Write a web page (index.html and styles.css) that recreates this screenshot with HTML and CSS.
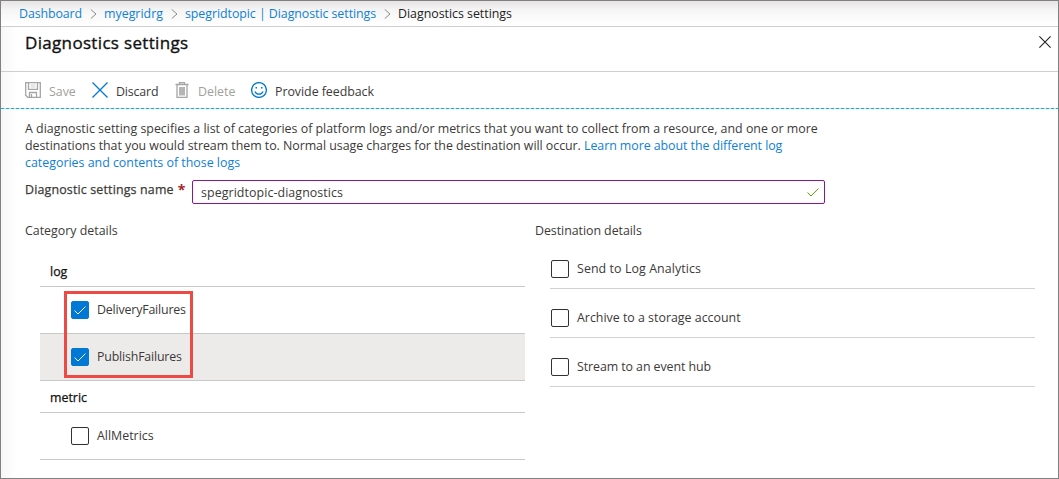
FILE: index.html
```html
<!DOCTYPE html>
<html lang="en">
<head>
<meta charset="utf-8">
<title>Diagnostics settings</title>
<link rel="stylesheet" href="styles.css">
</head>
<body>
<div class="page">
  <nav class="crumbs">
    <a class="c1">Dashboard</a><svg class="chev" viewBox="0 0 7 12"><path d="M.8 1.500 6 6 .8 10.500"/></svg>
    <a class="c2">myegridrg</a><svg class="chev" viewBox="0 0 7 12"><path d="M.8 1.500 6 6 .8 10.500"/></svg>
    <a class="c3">spegridtopic | Diagnostic settings</a><svg class="chev" viewBox="0 0 7 12"><path d="M.8 1.500 6 6 .8 10.500"/></svg>
    <span class="c4">Diagnostics settings</span>
  </nav>
  <header class="head">
    <h1>Diagnostics settings</h1>
    <svg class="close" viewBox="0 0 12 12"><path d="M.4.4 11.6 11.6M11.6.4.4 11.6"/></svg>
  </header>
  <div class="toolbar">
    <div class="tool t-save off"><svg viewBox="0 0 16 16"><path class="st" d="M.7.7h14.6v14.6H2.7l-2-2zM3.5.7v6.6h9V.7M4.5 15v-4.5h7V15M6.5 12v3"/><path class="st" d="M5.5 3h5M5.5 5h5" opacity=".35"/></svg><span>Save</span></div>
    <div class="tool t-discard"><svg viewBox="0 0 16 16"><path class="blue" d="M.5.5l15 15M15.5.5l-15 15"/></svg><span>Discard</span></div>
    <div class="tool t-delete off"><svg viewBox="0 0 16 16"><path class="st" d="M1.500 2.500h13M5.500 2.300V.6h5v1.700M3 2.500v12.800h10V2.500"/><path d="M5 5h6v8.500H5z" fill="#b5b5b5"/></svg><span>Delete</span></div>
    <div class="tool t-feed"><svg viewBox="0 0 16 16"><circle class="blue" cx="8" cy="8" r="7.4"/><path class="blue" d="M4 9.500c1.300 3.600 6.700 3.600 8 0"/><path d="M4.500 5H6v1.500H4.500zM10 5h1.500v1.500H10z" fill="#0078d4"/></svg><span>Provide feedback</span></div>
  </div>
  <svg class="dash" viewBox="0 0 1057 1"><path d="M0 .5H1057"/></svg>
  <main class="content">
    <p class="intro"><span class="l1">A diagnostic setting specifies a list of categories of platform logs and/or metrics that you want to collect from a resource, and one or more</span><br><span class="l2">destinations that you would stream them to. Normal usage charges for the destination will occur. </span><a class="l3">Learn more about the different log</a><br><a class="l4">categories and contents of those logs</a></p>
    <div class="field">
      <label><span>Diagnostic settings name</span> <b>*</b></label>
      <div class="input"><span>spegridtopic-diagnostics</span><svg viewBox="0 0 12 9"><path d="M.5 4.500 4 8 11.500.6"/></svg></div>
    </div>
    <div class="cols">
      <section class="left">
        <h2 class="cat">Category details</h2>
        <div class="list">
          <div class="group g-log"><span>log</span></div>
          <div class="row"><i class="box on"><svg viewBox="0 0 12 9"><path d="M.6 4.500 4 8 11.400.6"/></svg></i><span class="r1">DeliveryFailures</span></div>
          <div class="row hover"><i class="box on"><svg viewBox="0 0 12 9"><path d="M.6 4.500 4 8 11.400.6"/></svg></i><span class="r2">PublishFailures</span></div>
          <div class="group g-metric"><span>metric</span></div>
          <div class="row"><i class="box"></i><span class="r3">AllMetrics</span></div>
          <div class="mark"></div>
        </div>
      </section>
      <section class="right">
        <h2 class="dest">Destination details</h2>
        <div class="dests">
          <div class="drow"><i class="box"></i><span class="d1">Send to Log Analytics</span></div>
          <div class="drow"><i class="box"></i><span class="d2">Archive to a storage account</span></div>
          <div class="drow"><i class="box"></i><span class="d3">Stream to an event hub</span></div>
        </div>
      </section>
    </div>
  </main>
</div>
</body>
</html>
```
FILE: styles.css
```css
* { box-sizing: border-box; }
body { margin: 0; font: 12.4px/17px "Open Sans", "Noto Sans", sans-serif; color: #3b3a39; }
svg { display: block; fill: none; flex: none; }
a { color: #1080d6; }
h1, h2, p { margin: 0; font-weight: 400; }
.page { width: 1059px; height: 479px; border: 1px solid #808080; overflow: hidden;
  background: linear-gradient(90deg, #f7f7f7, #fff 16px); }
.crumbs { display: flex; align-items: center; height: 26px; padding-left: 18px; border-bottom: 1px solid #cfcfcf;
  background: linear-gradient(#e6e4e5, #f6f5f6 9px, #fff 24px); white-space: nowrap; }
.c1 { width: 71px; letter-spacing: -.1px; }
.c2 { width: 67px; }
.c3 { width: 199px; letter-spacing: -.06px; }
.c4 { color: #222; letter-spacing: -.02px; }
.chev { width: 7px; height: 12px; margin-right: 7px; stroke: #8a8a8a; }
.head { display: flex; justify-content: space-between; height: 45px; padding: 4px 7px 0 24px; border-bottom: 1px solid #cfcfcf; }
h1 { font-size: 17px; line-height: 24px; color: #111; letter-spacing: .33px; -webkit-text-stroke: .35px #111; white-space: nowrap; }
.close { width: 12px; height: 12px; margin-top: 5px; stroke: #222; stroke-width: 1.1; }
.toolbar { display: flex; height: 36px; padding-left: 24px; align-items: center; }
.tool { display: flex; align-items: center; gap: 8px; white-space: nowrap; }
.tool svg { width: 16px; height: 16px; }
.tool span { padding-top: 2px; }
.off { color: #a19f9d; }
.t-save { width: 67px; }
.t-discard { width: 82px; letter-spacing: -.15px; }
.t-delete { width: 77px; }
.t-feed { letter-spacing: -.04px; }
.st { stroke: #a5a5a5; stroke-width: 1.3; }
.blue { stroke: #0078d4; stroke-width: 1.3; }
.dash { width: 1057px; height: 1px; background: #d6d6d6; stroke: #00b4f0; stroke-dasharray: 3 2; }
.content { padding-left: 24px; }
.intro { padding-top: 11px; height: 71px; white-space: nowrap; }
.l2 { letter-spacing: -.04px; }
.l3 { letter-spacing: -.06px; }
.field { display: flex; height: 24px; }
label { display: flex; gap: 4px; width: 167px; line-height: 20px; white-space: nowrap; }
label span { letter-spacing: .17px; -webkit-text-stroke: .25px #3b3a39; }
label b { color: #a4262c; font-size: 14px; }
.input { display: flex; width: 633px; height: 24px; padding: 0 5px 0 8px; align-items: center; justify-content: space-between;
  border: 1px solid #881798; border-radius: 2px; background: #fff; }
.input span { letter-spacing: .08px; }
.input svg { width: 12px; height: 9px; stroke: #57a300; }
.cols { display: flex; padding-top: 18px; }
.left { width: 510px; }
h2 { font-size: inherit; line-height: 17px; }
.dest { letter-spacing: -.05px; }
.list { position: relative; width: 485px; margin: 16px 0 0 15px; }
.group { display: flex; align-items: center; padding: 2px 10px 0; color: #111; border-bottom: 1px solid #c8c8c8; -webkit-text-stroke: .25px #111; }
.g-log { height: 32px; }
.g-metric { height: 32px; }
.row { display: flex; align-items: center; gap: 8px; height: 47px; padding-left: 31px; border-bottom: 1px solid #c8c8c8; }
.row span, .drow span { padding-bottom: 1px; }
.r1, .r2 { letter-spacing: -.18px; }
.hover { background: #edebe9; }
.box { display: flex; align-items: center; justify-content: center; width: 18px; height: 18px; border: 1px solid #323130; border-radius: 2px; background: #fff; }
.on { background: #0078d4; border-color: #0078d4; }
.box svg { width: 12px; height: 9px; stroke: #fff; }
.mark { position: absolute; left: 24px; top: 36px; width: 129px; height: 87px; border: 3px solid #ed4a45; }
.dests { width: 485px; margin: 0 0 0 15px; padding-top: 1px; }
.drow { display: flex; align-items: center; gap: 8px; height: 49px; padding: 9px 0 0 1px; border-bottom: 1px solid #d2d2d2; }
.d1 { letter-spacing: .09px; }
.d3 { letter-spacing: -.08px; }
```
